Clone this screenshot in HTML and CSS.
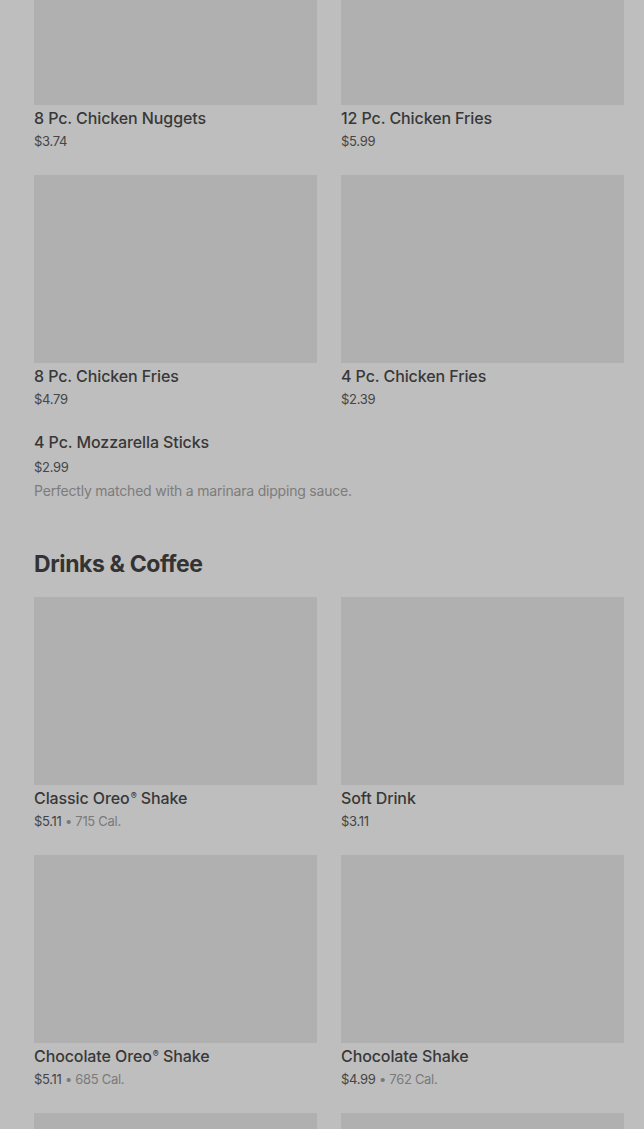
FILE: index.html
```html
<!DOCTYPE html>
<html>
<head>
<meta charset="utf-8">
<link rel="stylesheet" href="styles.css">
</head>
<body>
<main class="menu">
  <section class="section">
    <div class="grid">
      <div class="card"><div class="thumb"></div><div class="title">8 Pc. Chicken Nuggets</div><div class="meta"><span class="price">$3.74</span></div></div>
      <div class="card"><div class="thumb"></div><div class="title">12 Pc. Chicken Fries</div><div class="meta"><span class="price">$5.99</span></div></div>
      <div class="card"><div class="thumb"></div><div class="title">8 Pc. Chicken Fries</div><div class="meta"><span class="price">$4.79</span></div></div>
      <div class="card"><div class="thumb"></div><div class="title">4 Pc. Chicken Fries</div><div class="meta"><span class="price">$2.39</span></div></div>
    </div>
    <div class="plain">
      <div class="title">4 Pc. Mozzarella Sticks</div>
      <div class="meta plain-price"><span class="price">$2.99</span></div>
      <div class="desc">Perfectly matched with a marinara dipping sauce.</div>
    </div>
  </section>
  <section class="section">
    <h2 class="heading">Drinks &amp; Coffee</h2>
    <div class="grid">
      <div class="card"><div class="thumb"></div><div class="title">Classic Oreo<span class="reg">®</span> Shake</div><div class="meta"><span class="price">$5.11</span><span class="sep"> • </span><span class="cal">715 Cal.</span></div></div>
      <div class="card"><div class="thumb"></div><div class="title">Soft Drink</div><div class="meta"><span class="price">$3.11</span></div></div>
      <div class="card"><div class="thumb"></div><div class="title">Chocolate Oreo<span class="reg">®</span> Shake</div><div class="meta"><span class="price">$5.11</span><span class="sep"> • </span><span class="cal">685 Cal.</span></div></div>
      <div class="card"><div class="thumb"></div><div class="title">Chocolate Shake</div><div class="meta"><span class="price">$4.99</span><span class="sep"> • </span><span class="cal">762 Cal.</span></div></div>
      <div class="card"><div class="thumb"></div><div class="title">Vanilla Shake</div><div class="meta"><span class="price">$4.99</span></div></div>
      <div class="card"><div class="thumb"></div><div class="title">Strawberry Shake</div><div class="meta"><span class="price">$4.99</span></div></div>
    </div>
  </section>
</main>
</body>
</html>
```
FILE: styles.css
```css
html, body {
  margin: 0;
  padding: 0;
  background: #bebebe;
  overflow: hidden;
}
body {
  font-family: Inter, "Noto Sans", "Liberation Sans", sans-serif;
  color: #383838;
}
.menu {
  padding: 0 20px 0 34px;
  margin-top: -83px;
}
.grid {
  display: grid;
  grid-template-columns: 283px 283px;
  column-gap: 24px;
  row-gap: 24px;
}
.card {
  display: flex;
  flex-direction: column;
}
.thumb {
  height: 188px;
  background: #b0b0b0;
}
.title {
  margin-top: 3px;
  font-size: 16px;
  line-height: 20px;
  font-weight: 500;
  color: #383838;
  letter-spacing: -0.1px;
}
.reg {
  font-size: 9px;
  vertical-align: 5px;
  line-height: 0;
  margin-left: 1px;
}
.meta {
  margin-top: 3px;
  font-size: 13px;
  line-height: 20px;
  color: #454545;
  letter-spacing: -0.3px;
}
.sep, .cal {
  color: #7a7a7a;
}
.plain {
  margin-top: 23px;
}
.plain .title {
  margin-top: 0;
}
.plain-price {
  margin-top: 5px;
}
.desc {
  margin-top: 4px;
  font-size: 14px;
  line-height: 20px;
  color: #7c7c7c;
  letter-spacing: -0.2px;
}
.heading {
  margin: 47px 0 17px;
  font-size: 23px;
  line-height: 32px;
  font-weight: 700;
  color: #333333;
  letter-spacing: -0.4px;
}
```
